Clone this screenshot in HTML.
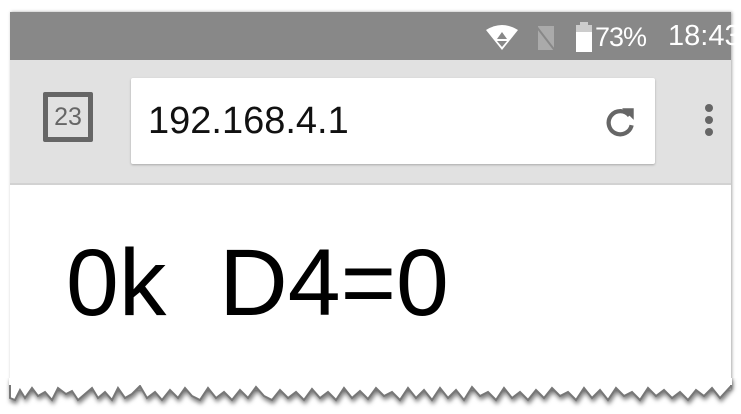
<!DOCTYPE html>
<html><head><style>
body{margin:0;width:741px;height:414px;background:#fff;position:relative;overflow:hidden;font-family:"Liberation Sans",sans-serif}
.frame{position:absolute;left:10px;top:12px;width:721px;height:378px;background:#fff;box-shadow:1px 0 3px rgba(0,0,0,.35)}
.status{position:absolute;left:0;top:0;width:721px;height:48px;background:#888}
.tool{position:absolute;left:0;top:48px;width:721px;height:123px;background:#e1e1e1;border-bottom:2px solid #d2d2d2}
.url{position:absolute;left:121px;top:18px;width:524px;height:86px;background:#fff;border-radius:2px;box-shadow:0 1px 2px rgba(0,0,0,.25)}
.url span{position:absolute;left:17px;top:22px;font-size:38px;color:#111}
.tab{position:absolute;left:33px;top:32px;width:50px;height:50px;border:5px solid #666;box-sizing:border-box;border-radius:2px;font-size:25px;color:#666;text-align:center;line-height:40px}
.big{position:absolute;left:56px;top:224px;font-size:95px;white-space:pre;color:#000;line-height:1}
.torn{position:absolute;left:0;top:378px}
</style></head><body>
<div class="frame">
 <div class="status">
  <svg style="position:absolute;left:474px;top:12px" width="36" height="26"><path d="M2 6 Q18 -4 34 6 L18 26Z" fill="#fff"/><path d="M18 8 L13 15 H23Z M13 17 H23 L18 23Z" fill="#888"/></svg>
  <svg style="position:absolute;left:524px;top:12px" width="24" height="28"><path d="M4 2 H20 V26 H4Z" fill="#aaa"/><path d="M2 2 L22 28" stroke="#888" stroke-width="2"/></svg>
  <svg style="position:absolute;left:566px;top:10px" width="16" height="30"><rect x="4" y="0" width="8" height="4" fill="#ccc"/><rect x="0" y="3" width="16" height="27" fill="#ccc"/><rect x="0" y="10" width="16" height="20" fill="#fff"/></svg>
  <div style="position:absolute;left:585px;top:10px;font-size:27px;color:#fff;letter-spacing:-1px">73%</div>
  <div style="position:absolute;left:658px;top:8px;font-size:29px;color:#fff;white-space:nowrap">18:43</div>
 </div>
 <div class="tool">
  <div class="tab">23</div>
  <div class="url"><span>192.168.4.1</span>
   <svg style="position:absolute;left:470px;top:25px" width="38" height="38" viewBox="0 0 36 36"><path d="M27 12 A11 11 0 1 0 29 21" fill="none" stroke="#666" stroke-width="4"/><path d="M20 5 H31 V16Z" fill="#666"/></svg>
  </div>
  <svg style="position:absolute;left:693px;top:42px" width="12" height="40"><circle cx="6" cy="6" r="4" fill="#666"/><circle cx="6" cy="18" r="4" fill="#666"/><circle cx="6" cy="30" r="4" fill="#666"/></svg>
 </div>
 <div class="big">0k  D4=0</div>
</div>
<svg class="torn" width="741" height="36"><path d="M10 20 L15 22 L20 12 L25 20 L32 10 L38 18 L45 14 L52 22 L58 10 L66 16 L72 13 L78 22 L85 16 L92 10 L98 20 L105 14 L112 22 L118 10 L125 20 L132 16 L140 8 L147 20 L155 14 L162 22 L170 12 L178 20 L185 10 L192 18 L200 22 L208 10 L216 20 L224 14 L232 22 L240 12 L248 20 L256 9 L264 18 L272 22 L280 12 L288 20 L296 14 L304 22 L312 11 L320 20 L328 14 L336 22 L344 10 L352 20 L360 13 L368 21 L376 10 L384 18 L392 14 L400 22 L408 10 L416 20 L424 12 L432 22 L440 10 L448 20 L456 12 L464 22 L472 9 L480 18 L488 14 L496 22 L504 10 L512 20 L520 14 L528 22 L536 12 L544 20 L552 10 L560 18 L568 14 L576 22 L584 10 L592 20 L600 12 L608 22 L616 10 L624 18 L632 14 L640 22 L648 10 L656 18 L664 12 L672 20 L680 14 L688 22 L696 12 L704 18 L712 10 L720 20 L731 8 V0 H10Z" fill="#fff" stroke="#777" stroke-width="2" style="filter:drop-shadow(1px 3px 2px rgba(0,0,0,.5))"/><rect x="9" y="0" width="723" height="7" fill="#fff"/></svg>
</body></html>
